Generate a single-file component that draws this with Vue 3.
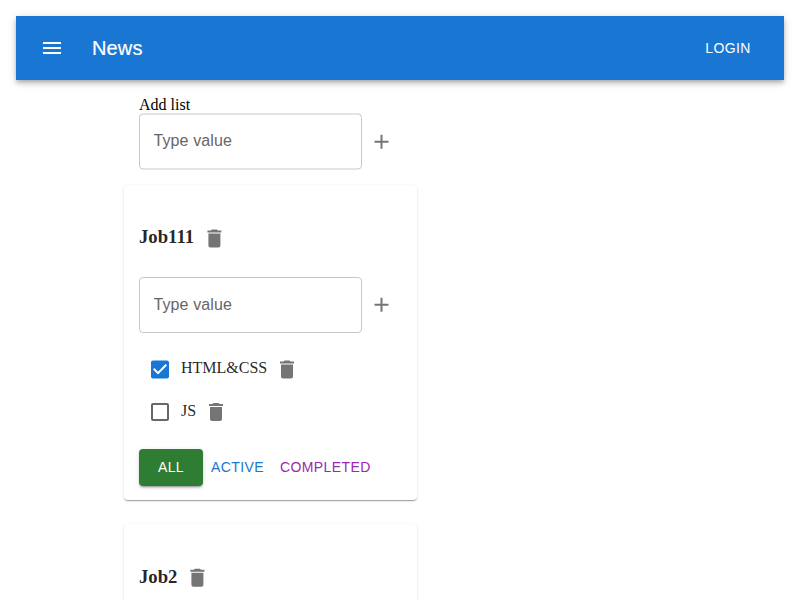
<script setup>
import { ref } from 'vue'

const trash = 'M6 19c0 1.1.9 2 2 2h8c1.1 0 2-.9 2-2V7H6v12zM19 4h-3.5l-1-1h-5l-1 1H5v2h14V4z'
const plus = 'M19 13h-6v6h-2v-6H5v-2h6V5h2v6h6v2z'
const menu = 'M3 18h18v-2H3v2zm0-5h18v-2H3v2zm0-7v2h18V6H3z'
const checked = 'M19 3H5c-1.11 0-2 .9-2 2v14c0 1.1.89 2 2 2h14c1.11 0 2-.9 2-2V5c0-1.1-.89-2-2-2zm-9 14l-5-5 1.41-1.41L10 14.17l7.59-7.59L19 8l-9 9z'
const unchecked = 'M19 5v14H5V5h14m0-2H5c-1.1 0-2 .9-2 2v14c0 1.1.9 2 2 2h14c1.1 0 2-.9 2-2V5c0-1.1-.9-2-2-2z'

const lists = ref([
  { title: 'Job111', tasks: [{ name: 'HTML&CSS', done: true }, { name: 'JS', done: false }] },
  { title: 'Job2', tasks: [] },
])
</script>

<template>
  <div class="page">
    <header class="bar">
      <button class="icon-btn menu"><svg viewBox="0 0 24 24"><path :d="menu" /></svg></button>
      <div class="brand">News</div>
      <button class="btn login">Login</button>
    </header>
    <main class="content">
      <section class="add">
        <div class="caption">Add list</div>
        <div class="field-row">
          <div class="field-wrap">
            <input class="field" placeholder="Type value" />
            <span class="outline"></span>
          </div>
          <button class="icon-btn add-btn"><svg viewBox="0 0 24 24"><path :d="plus" /></svg></button>
        </div>
      </section>
      <section v-for="list in lists" :key="list.title" class="card">
        <h3 class="title">
          <span>{{ list.title }}</span>
          <button class="icon-btn"><svg viewBox="0 0 24 24"><path :d="trash" /></svg></button>
        </h3>
        <div class="field-row">
          <div class="field-wrap">
            <input class="field" placeholder="Type value" />
            <span class="outline"></span>
          </div>
          <button class="icon-btn add-btn"><svg viewBox="0 0 24 24"><path :d="plus" /></svg></button>
        </div>
        <ul class="tasks">
          <li v-for="task in list.tasks" :key="task.name" class="task">
            <button class="icon-btn check" :class="{ done: task.done }" @click="task.done = !task.done">
              <svg viewBox="0 0 24 24"><path :d="task.done ? checked : unchecked" /></svg>
            </button>
            <span class="name">{{ task.name }}</span>
            <button class="icon-btn"><svg viewBox="0 0 24 24"><path :d="trash" /></svg></button>
          </li>
        </ul>
        <div v-if="list.tasks.length" class="filters">
          <button class="btn all">All</button>
          <button class="btn active">Active</button>
          <button class="btn completed">Completed</button>
        </div>
      </section>
    </main>
  </div>
</template>

<style>
html, body { background: #fff; }
body { overflow: hidden; }
</style>

<style scoped>
.page {
  box-sizing: border-box;
  height: 600px;
  overflow: hidden;
  padding: 16px;
  font: 16px/18px "Liberation Serif", "Times New Roman", serif;
  color: #000;
}
.bar {
  box-sizing: border-box;
  display: flex;
  align-items: center;
  height: 64px;
  padding: 0 24px;
  background: #1976d2;
  color: #fff;
  box-shadow: 0 2px 4px -1px rgba(0,0,0,.2), 0 4px 5px 0 rgba(0,0,0,.14), 0 1px 10px 0 rgba(0,0,0,.12);
}
.brand {
  flex: 1;
  font: 500 20px/32px "Liberation Sans", Arial, sans-serif;
  letter-spacing: .15px;
  -webkit-text-stroke: .2px currentColor;
}
.icon-btn {
  flex: none;
  display: flex;
  padding: 8px;
  border: 0;
  background: none;
  color: #757575;
  cursor: pointer;
}
.icon-btn svg { width: 24px; height: 24px; fill: currentColor; }
.menu { margin: 0 20px 0 -8px; color: #fff; }
.btn {
  box-sizing: border-box;
  min-width: 64px;
  padding: 6px 8px;
  border: 0;
  border-radius: 4px;
  background: none;
  font: 14px/24.5px "Liberation Sans", Arial, sans-serif;
  letter-spacing: .4px;
  text-transform: uppercase;
  white-space: nowrap;
  cursor: pointer;
}
.login { color: #fff; }
.content { width: 293px; margin-left: 108px; }
.add { padding: 16px 15px 15px; }
.caption { height: 18px; }
.field-row { display: flex; align-items: center; height: 56px; }
.field-wrap { position: relative; width: 223px; height: 56px; }
.field {
  box-sizing: border-box;
  display: block;
  width: 100%;
  height: 56px;
  padding: 0 14px 1px 14.5px;
  border: 0;
  background: transparent;
  outline: 0;
  font: 16px/23px "Liberation Sans", Arial, sans-serif;
  letter-spacing: .1px;
}
.add .field { padding-bottom: 3px; }
.field::placeholder { color: #666; opacity: 1; }
.outline {
  position: absolute;
  inset: 0 .4px 0 0;
  border: 1px solid #c8c8c8;
  border-radius: 4px;
  pointer-events: none;
}
.add .outline { transform: translateY(-.5px); }
.add-btn svg { transform: translate(-.5px, -.3px); }
.card {
  box-sizing: border-box;
  height: 315px;
  margin-bottom: 24px;
  padding: 33px 15px 14px;
  border-radius: 4px;
  background: #fff;
  color: rgba(0,0,0,.87);
  box-shadow: 0 2px 1px -1px rgba(0,0,0,.2), 0 1px 1px 0 rgba(0,0,0,.14), 0 1px 3px 0 rgba(0,0,0,.12);
}
.card + .card { padding-top: 34px; }
.title {
  display: flex;
  align-items: center;
  margin: 0 0 19px;
  font-size: 18.72px;
  line-height: 21px;
}
.title span { padding-bottom: 3px; }
.title svg { transform: translate(.4px, .4px); }
.card + .card .title svg { transform: translate(.4px, -.3px); }
.tasks { margin: 15.3px 0 15.5px; padding: 0; list-style: none; }
.task { display: flex; align-items: center; height: 42.5px; }
.task:first-child svg { transform: translateY(-.5px); }
.check { padding: 9px; color: #666; }
.check.done { color: #1976d2; }
.name { padding-bottom: 3px; }
.filters { display: flex; }
.all {
  height: 37px;
  padding: 6px 16px;
  background: #2e7d32;
  color: #fff;
  box-shadow: 0 3px 1px -2px rgba(0,0,0,.2), 0 2px 2px 0 rgba(0,0,0,.14), 0 1px 5px 0 rgba(0,0,0,.12);
}
.active { color: #1976d2; }
.completed { color: #9c27b0; }
</style>
